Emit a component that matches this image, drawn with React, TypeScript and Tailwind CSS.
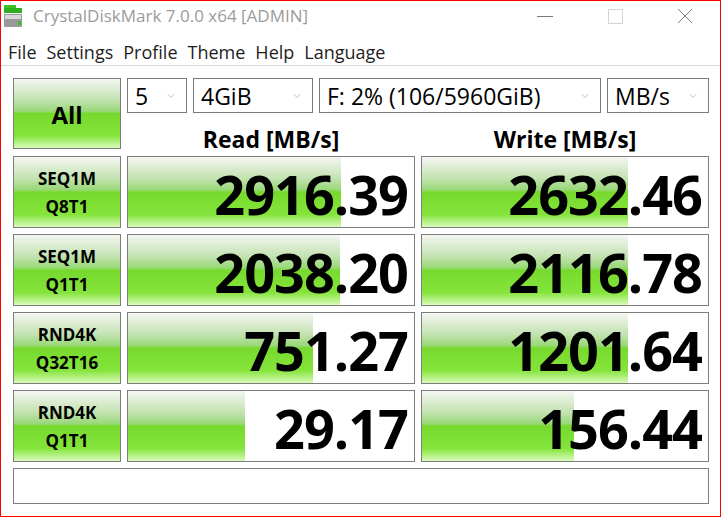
import { ChevronDown } from 'lucide-react'

const grad =
	'bg-[linear-gradient(to_bottom,#f4f6f2_0%,#c4e3b2_30%,#98d877_47%,#77d92d_50%,#85e43b_82%,#dafabc_100%)] bg-no-repeat'

const font = { fontFamily: '"Open Sans", "Noto Sans", sans-serif' }

const rows = [
	{ a: 'SEQ1M', b: 'Q8T1', read: '2916.39', rw: 213, write: '2632.46', ww: 206 },
	{ a: 'SEQ1M', b: 'Q1T1', read: '2038.20', rw: 212, write: '2116.78', ww: 206 },
	{ a: 'RND4K', b: 'Q32T16', read: '751.27', rw: 185, write: '1201.64', ww: 206 },
	{ a: 'RND4K', b: 'Q1T1', read: '29.17', rw: 117, write: '156.44', ww: 152 },
]

function Combo({ w, value }: { w: string; value: string }) {
	return (
		<div
			className={`${w} h-[35px] border border-[#7a7a7a] bg-white flex items-center pl-[7px] pr-[9px] pt-[2px] text-[23px] leading-none text-black`}
		>
			<span className="flex-1 whitespace-nowrap">{value}</span>
			<ChevronDown size={12} strokeWidth={1.25} className="text-[#9a9a9a] -mt-[2px]" />
		</div>
	)
}

function Result({ value, fill }: { value: string; fill: number }) {
	return (
		<div
			className={`w-[288px] h-full border border-[#7d7d7d] bg-white ${grad} flex items-center justify-end pr-[6px] pt-[4px]`}
			style={{ backgroundSize: `${fill}px 100%` }}
		>
			<span className="text-[54px] font-bold leading-none tracking-[-1px] text-black">{value}</span>
		</div>
	)
}

function AppIcon() {
	return (
		<svg width="20" height="24" viewBox="0 0 20 24">
			<rect x="0" y="0" width="12" height="3" fill="#3fbf2a" />
			<rect x="0" y="3" width="18" height="5" fill="#2fae1f" />
			<rect x="0" y="9" width="18" height="13" rx="1" fill="#9a9a9a" />
			<rect x="1" y="10" width="16" height="4" fill="#d9d9d9" />
			<rect x="14" y="16" width="3" height="4" fill="#31c22b" />
		</svg>
	)
}

export default function App() {
	return (
		<div className="w-[722px] h-[518px] bg-white" style={font}>
			<div className="w-[721px] h-[517px] border border-[#ff0000] bg-white flex flex-col">
				<div className="h-[30px] flex items-center shrink-0">
					<div className="pl-[3px] pr-[9px] pt-[2px]">
						<AppIcon />
					</div>
					<span className="text-[17px] text-[#9b9b9b] flex-1">CrystalDiskMark 7.0.0 x64 [ADMIN]</span>
					<div className="flex items-center">
						<div className="w-[70px] flex justify-center">
							<div className="w-[16px] h-px bg-[#7a7a7a]" />
						</div>
						<div className="w-[70px] flex justify-center">
							<div className="w-[15px] h-[15px] border border-[#d4d4d4]" />
						</div>
						<div className="w-[70px] flex justify-center">
							<svg width="16" height="16" viewBox="0 0 16 16">
								<path d="M1 1 L15 15 M15 1 L1 15" stroke="#7a7a7a" strokeWidth="1" />
							</svg>
						</div>
					</div>
				</div>
				<div className="h-[35px] shrink-0 flex items-center gap-[10px] pl-[7px] pt-[9px] text-[18px] text-[#1e1e1e] border-b border-[#d9d9d9]">
					<span>File</span>
					<span>Settings</span>
					<span>Profile</span>
					<span>Theme</span>
					<span>Help</span>
					<span>Language</span>
				</div>
				<div className="pl-[12px] pt-[12px] flex flex-col">
					<div className="flex gap-[6px] h-[78px]">
						<div
							className={`w-[108px] h-[71px] border border-[#7d7d7d] ${grad} flex items-center justify-center pt-[3px] text-[24px] font-bold text-black`}
						>
							All
						</div>
						<div className="flex flex-col">
							<div className="flex gap-[6px]">
								<Combo w="w-[60px]" value="5" />
								<Combo w="w-[120px]" value="4GiB" />
								<Combo w="w-[282px]" value="F: 2% (106/5960GiB)" />
								<Combo w="w-[102px]" value="MB/s" />
							</div>
							<div className="flex gap-[6px] pt-[12px]">
								<div className="w-[288px] text-center text-[23px] font-bold leading-[28px] text-black">Read [MB/s]</div>
								<div className="w-[288px] text-center text-[23px] font-bold leading-[28px] text-black">Write [MB/s]</div>
							</div>
						</div>
					</div>
					<div className="flex flex-col gap-[6px]">
						{rows.map((r, i) => (
							<div key={i} className="flex gap-[6px] h-[72px]">
								<div
									className={`w-[108px] h-full border border-[#7d7d7d] ${grad} flex flex-col items-center justify-center pt-[2px] text-[17px] font-bold leading-[28px] text-black`}
								>
									<span>{r.a}</span>
									<span>{r.b}</span>
								</div>
								<Result value={r.read} fill={r.rw} />
								<Result value={r.write} fill={r.ww} />
							</div>
						))}
						<div className="w-[696px] h-[36px] border border-[#7d7d7d] bg-white" />
					</div>
				</div>
			</div>
		</div>
	)
}
